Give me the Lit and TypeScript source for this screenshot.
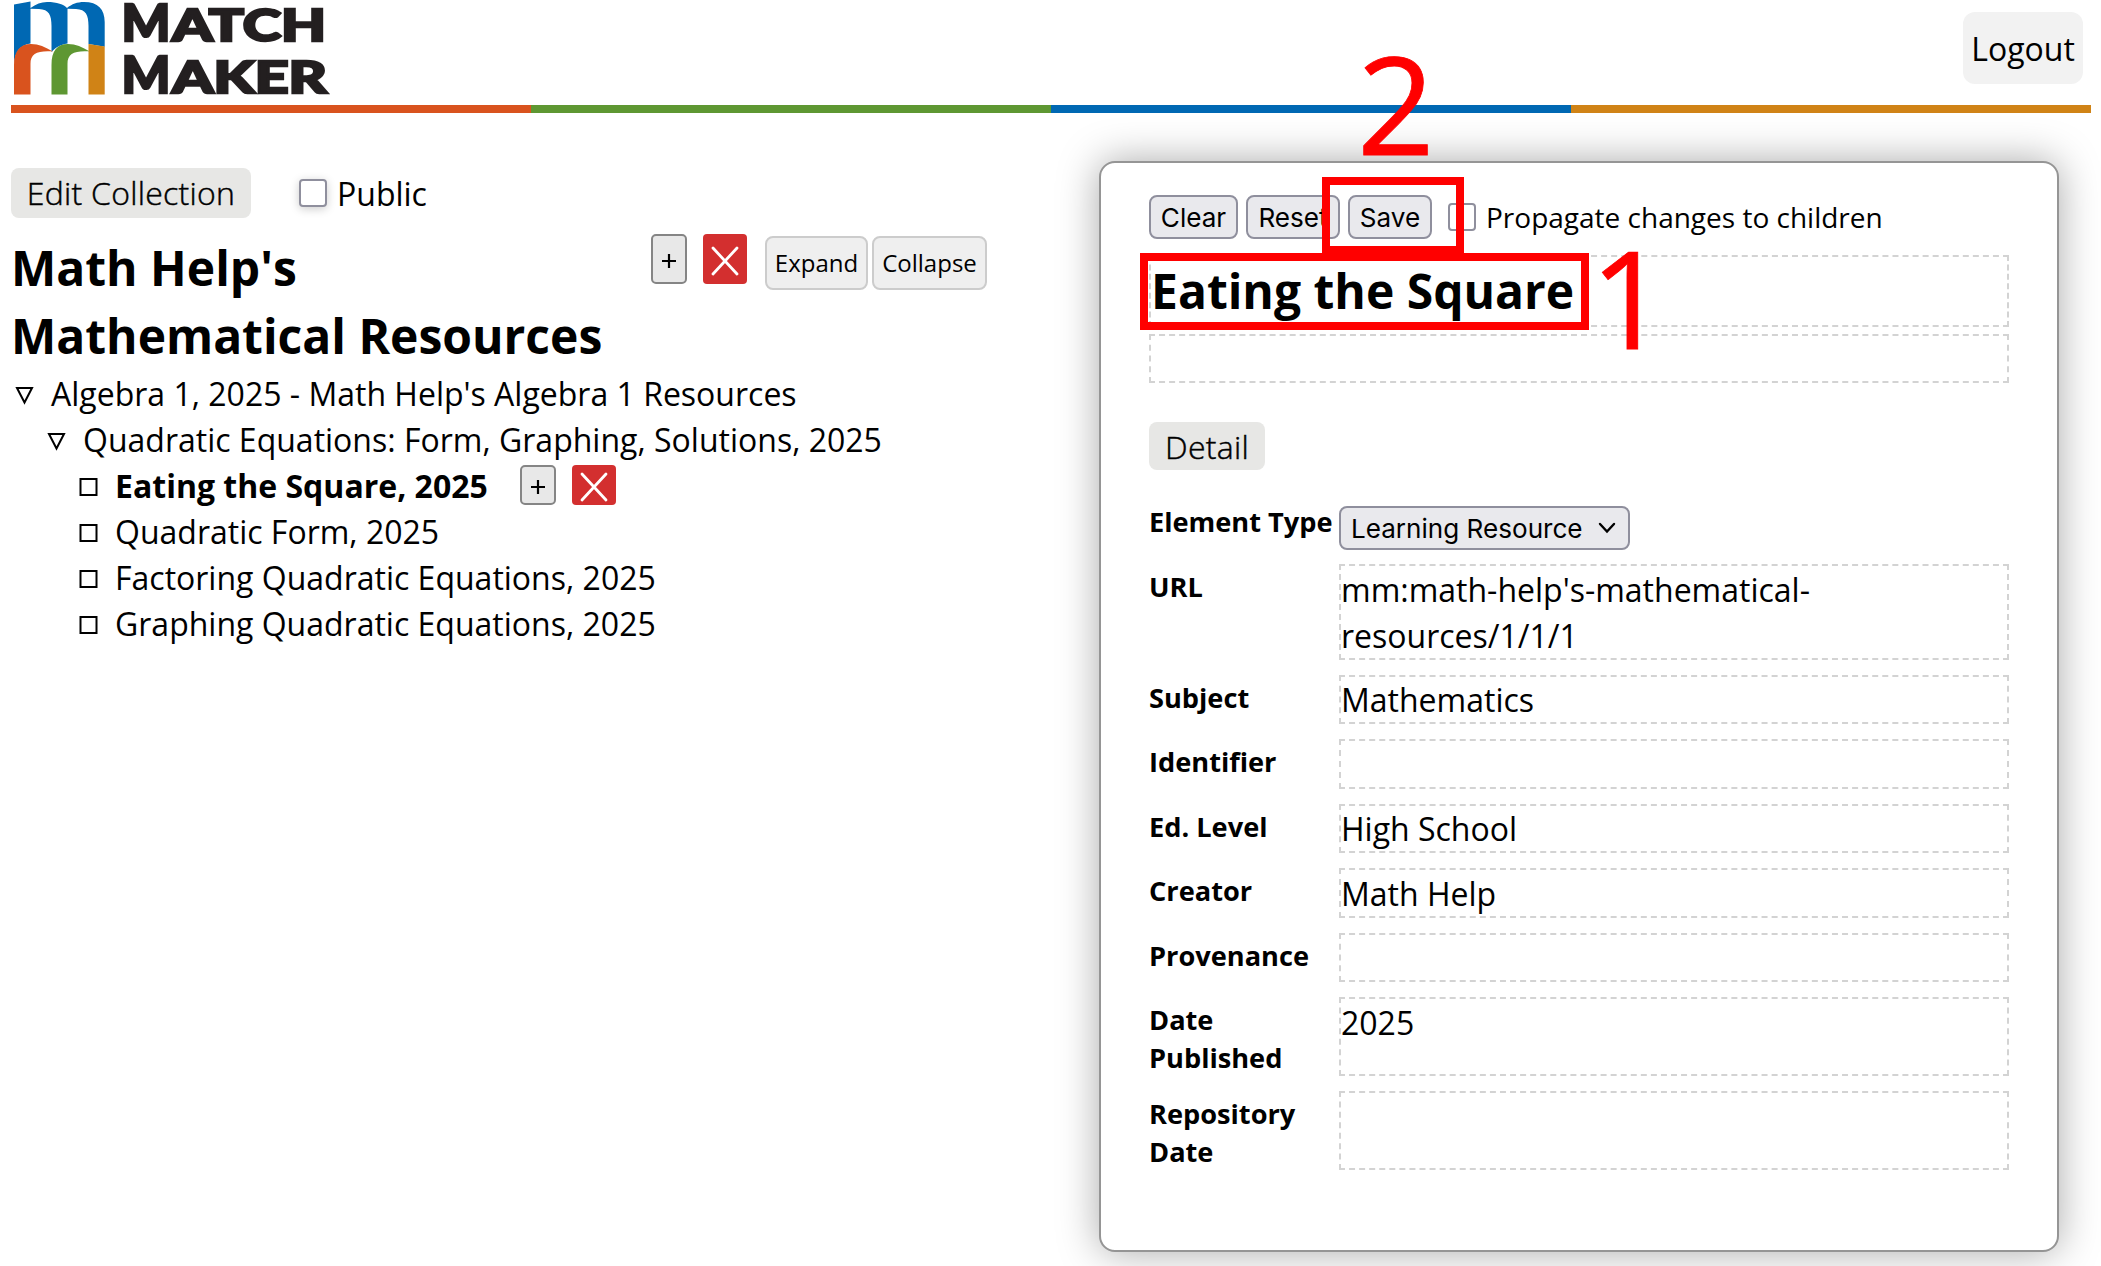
import { LitElement, html, css, svg, nothing } from "lit";
import { customElement, property } from "lit/decorators.js";

interface Node {
  label: string;
  depth: number;
  open?: boolean;
  selected?: boolean;
}

const NODES: Node[] = [
  { label: "Algebra 1, 2025 - Math Help's Algebra 1 Resources", depth: 0, open: true },
  { label: "Quadratic Equations: Form, Graphing, Solutions, 2025", depth: 1, open: true },
  { label: "Eating the Square, 2025", depth: 2, selected: true },
  { label: "Quadratic Form, 2025", depth: 2 },
  { label: "Factoring Quadratic Equations, 2025", depth: 2 },
  { label: "Graphing Quadratic Equations, 2025", depth: 2 },
];

const FIELDS: [string, string][] = [
  ["URL", "mm:math-help's-mathematical-resources/1/1/1"],
  ["Subject", "Mathematics"],
  ["Identifier", ""],
  ["Ed. Level", "High School"],
  ["Creator", "Math Help"],
  ["Provenance", ""],
  ["Date Published", "2025"],
  ["Repository Date", ""],
];

@customElement("mm-logo")
class MmLogo extends LitElement {
  static styles = css`
    :host { display: block; width: 330px; height: 97px; }
    svg { display: block; overflow: visible; }
    .word { font-family: Lato, "Open Sans", sans-serif; font-weight: 900; fill: #231f20; stroke: #231f20; stroke-width: 2.4px; }
  `;
  render() {
    const word = (s: string, x: number, y: number, w: number, size: number) =>
      svg`<text class="word" x=${x} y=${y} font-size=${size} textLength=${w} lengthAdjust="spacingAndGlyphs">${s}</text>`;
    return html`<svg width="330" height="97" viewBox="0 0 330 97">
      <path fill="#0068b3" d="M14 4.500 L30.500 1.500 V8 C36 4 41 2 47 2 C57 2 64 4.500 67 8 C72 4 77 2 84 2 C98 2 104.700 9 104.700 22 V46.800 L88.500 44 V26 C88.500 15 86 9.500 76 9 L67.500 8.800 V43.500 C60 45 56 47 51.500 52 V26 C51.500 15 49 9.500 39 9 L30.500 8.800 V43.500 C20 45 15 52 14 64 Z"/>
      <path fill="#d9531e" d="M14 94.500 V65 C14 51 20 44 31 44 C39 44 45 47 53 51.500 C38 50.500 30.500 53 30.500 64 V94.500 Z"/>
      <path fill="#5e9732" d="M51.500 94.500 V65 C51.500 51 57 44 68 44 C76 44 82 47 90 51.500 C75 50.500 67.500 53 67.500 64 V94.500 Z"/>
      <path fill="#d08316" d="M88.500 44 L104.700 46.500 V94.500 H88.500 Z"/>
      ${word("M", 121.500, 41.400, 49, 51)}${word("ATCH", 172, 41.400, 154, 43.500)}
      ${word("M", 121.500, 93.400, 49, 51)}${word("AKER", 172, 93.400, 155, 43.500)}
    </svg>`;
  }
}

@customElement("mm-node-actions")
class MmNodeActions extends LitElement {
  @property({ type: Boolean, reflect: true }) compact = false;
  static styles = css`
    :host { display: flex; gap: 16px; }
    .add {
      box-sizing: border-box; width: 36px; height: 50px; border: 2px solid #858585; border-radius: 5px;
      background: #e8e8e8; display: grid; place-items: center;
    }
    .del {
      width: 44px; height: 50px; border-radius: 4px; background: #d32f2f; display: grid; place-items: center;
    }
    .add svg { margin-top: 3px; }
    .del svg { margin-top: 3px; }
    :host([compact]) .add, :host([compact]) .del { height: 40px; }
  `;
  render() {
    return html`
      <div class="add"><svg width="16" height="16" viewBox="0 0 16 16"><path d="M1 8H15M8 1V15" stroke="#000" stroke-width="2.200"/></svg></div>
      <div class="del"><svg width="28" height="30" viewBox="0 0 28 30"><path d="M2 2L26 28M26 2L2 28" stroke="#fff" stroke-width="2.800" stroke-linecap="round"/></svg></div>
    `;
  }
}

@customElement("app-root")
class AppRoot extends LitElement {
  static styles = css`
    :host {
      display: block; position: relative; box-sizing: border-box; height: 1266px; overflow: hidden;
      padding: 0 10px 0 11px; background: #fff; color: #000;
      font-family: "Open Sans", "Noto Sans", sans-serif; font-size: 32px; line-height: 46px;
    }
    header { height: 105px; display: flex; justify-content: space-between; align-items: flex-start; }
    mm-logo { margin-left: -11px; }
    .logout {
      box-sizing: border-box; width: 120px; height: 72px; margin: 12px 8px 0 0; border-radius: 12px;
      background: #f2f2f2; line-height: 74px; text-align: center;
    }
    .stripe { height: 8px; display: grid; grid-template-columns: repeat(4, 1fr); }
    .s1 { background: #d9531e; } .s2 { background: #5e9732; } .s3 { background: #0068b3; } .s4 { background: #d08316; }
    main { display: flex; justify-content: space-between; padding-top: 48px; }
    .left { width: 976px; padding-top: 7px; }
    .bar { display: flex; align-items: center; }
    .tag {
      box-sizing: border-box; background: #e7e7e5; border-radius: 8px; height: 50px; line-height: 49px;
      font-weight: 300; letter-spacing: .26px; -webkit-text-stroke: .45px #000;
      width: 240px; text-align: center; white-space: nowrap;
    }
    .check { box-sizing: border-box; width: 28px; height: 28px; border: 2px solid #8f8f9d; border-radius: 4px; background: #fff; flex: none; }
    .public { margin: 0 10px 0 48px; box-shadow: 0 2px 10px rgba(0,0,0,.2); }
    .publabel { line-height: 48px; padding-top: 2px; }
    .root { display: flex; align-items: flex-start; margin-top: 16px; padding-bottom: 1px; }
    h1 { margin: 0; font-size: 48px; line-height: 68px; font-weight: 700; }
    .root h1 { width: 640px; }
    .rootbtns { display: flex; gap: 4px; margin: 2px 0 0 18px; }
    .small {
      box-sizing: border-box; height: 54px; border: 2px solid #ccc; border-radius: 8px; background: #efefef;
      font-size: 24px; line-height: 50px; text-align: center; width: 103px;
    }
    .small.wide { width: 115px; }
    .row { display: flex; height: 46px; white-space: nowrap; }
    .mark { width: 40px; height: 46px; flex: none; }
    .d1 { padding-left: 32px; } .d2 { padding-left: 64px; }
    .sel { font-weight: 700; }
    .row mm-node-actions { margin: 2px 0 0 32px; }
    .panel {
      box-sizing: border-box; width: 960px; height: 1091px; margin-right: 32px; padding: 32px 48px;
      border: 2px solid #959595; border-radius: 16px; background: #fff; box-shadow: 0 0 40px rgba(0,0,0,.34);
    }
    .actions { display: flex; align-items: center; height: 44px; margin-bottom: 16px; }
    .ui {
      box-sizing: border-box; height: 44px; border: 2px solid #8f8f9d; border-radius: 8px; background: #e9e9ed;
      font-family: Inter, "Liberation Sans", sans-serif; font-size: 26.100px; line-height: 41px; text-align: center;
    }
    .b1 { width: 89px; } .b2 { width: 94px; margin: 0 8px; } .b3 { width: 84px; margin-right: 16px; }
    .prop { font-size: 28px; margin-left: 10px; line-height: 40px; padding-bottom: 1px; white-space: nowrap; }
    .dash { box-sizing: border-box; border: 2px dashed #d3d3d3; min-height: 49px; overflow-wrap: anywhere; }
    .title { height: 72px; margin-bottom: 7px; }
    .detail { width: 116px; height: 48px; line-height: 49px; margin: 39px 0 36px; }
    .form { display: grid; grid-template-columns: 190px 1fr; row-gap: 15px; }
    .form .dash { height: 49.500px; padding-top: .500px; }
    .form .dash.url { height: 95.500px; padding-top: 1px; }
    .form .dash.tall { height: 79px; }
    .label { font-size: 27.200px; line-height: 38px; font-weight: 700; white-space: nowrap; margin-top: -3px; height: 30px; }
    .fl { margin-top: 4px; }
    .label.wrap { white-space: normal; width: 160px; height: 75px; margin-top: 3.500px; }
    .select { display: flex; align-items: center; justify-content: space-between; width: 291px; padding: 0 12px 0 10px; margin-bottom: -1px; }
    .ring { position: absolute; box-sizing: border-box; border: 8px solid #f00; }
    .r1 { left: 1140px; top: 253px; width: 449px; height: 77px; }
    .r2 { left: 1322px; top: 177px; width: 142px; height: 77px; }
    .num { position: absolute; color: #f00; font-size: 136px; line-height: 186px; -webkit-text-stroke: .800px #f00; }
    .n1 { left: 1590px; top: 204px; }
    .n2 { left: 1357px; top: 10px; }
  `;

  private mark(n: Node) {
    return html`<svg class="mark" viewBox="0 0 40 46">
      ${n.open
        ? svg`<path d="M6 17H21L13.500 31.500Z" fill="none" stroke="#000" stroke-width="2"/>`
        : svg`<rect x="5.500" y="16" width="16" height="16" fill="none" stroke="#000" stroke-width="2"/>`}
    </svg>`;
  }

  render() {
    return html`
      <header><mm-logo></mm-logo><div class="logout">Logout</div></header>
      <div class="stripe"><i class="s1"></i><i class="s2"></i><i class="s3"></i><i class="s4"></i></div>
      <main>
        <section class="left">
          <div class="bar">
            <div class="tag">Edit Collection</div>
            <span class="check public"></span><span class="publabel">Public</span>
          </div>
          <div class="root">
            <h1>Math Help's<br />Mathematical Resources</h1>
            <mm-node-actions></mm-node-actions>
            <div class="rootbtns"><div class="small">Expand</div><div class="small wide">Collapse</div></div>
          </div>
          ${NODES.map((n) => html`
            <div class="row d${n.depth} ${n.selected ? "sel" : ""}">
              ${this.mark(n)}<span>${n.label}</span>
              ${n.selected ? html`<mm-node-actions compact></mm-node-actions>` : nothing}
            </div>`)}
        </section>
        <section class="panel">
          <div class="actions">
            <div class="ui b1">Clear</div><div class="ui b2">Reset</div><div class="ui b3">Save</div>
            <span class="check"></span><span class="prop">Propagate changes to children</span>
          </div>
          <h1 class="dash title">Eating the Square</h1>
          <div class="dash"></div>
          <div class="tag detail">Detail</div>
          <div class="form">
            <div class="label">Element Type</div>
            <div class="ui select">
              <span>Learning Resource</span>
              <svg width="18" height="12" viewBox="0 0 18 12"><path d="M2 2L9 9.500L16 2" fill="none" stroke="#000" stroke-width="2.400" stroke-linecap="round"/></svg>
            </div>
            ${FIELDS.map(([k, v]) => html`
              <div class="label fl ${k.includes("Date") ? "wrap" : ""}">${k}</div>
              <div class="dash ${k === "URL" ? "url" : k.includes("Date") ? "tall" : ""}">${v}</div>`)}
          </div>
        </section>
      </main>
      <div class="ring r2"></div><div class="ring r1"></div>
      <div class="num n2">2</div><div class="num n1">1</div>
    `;
  }
}
